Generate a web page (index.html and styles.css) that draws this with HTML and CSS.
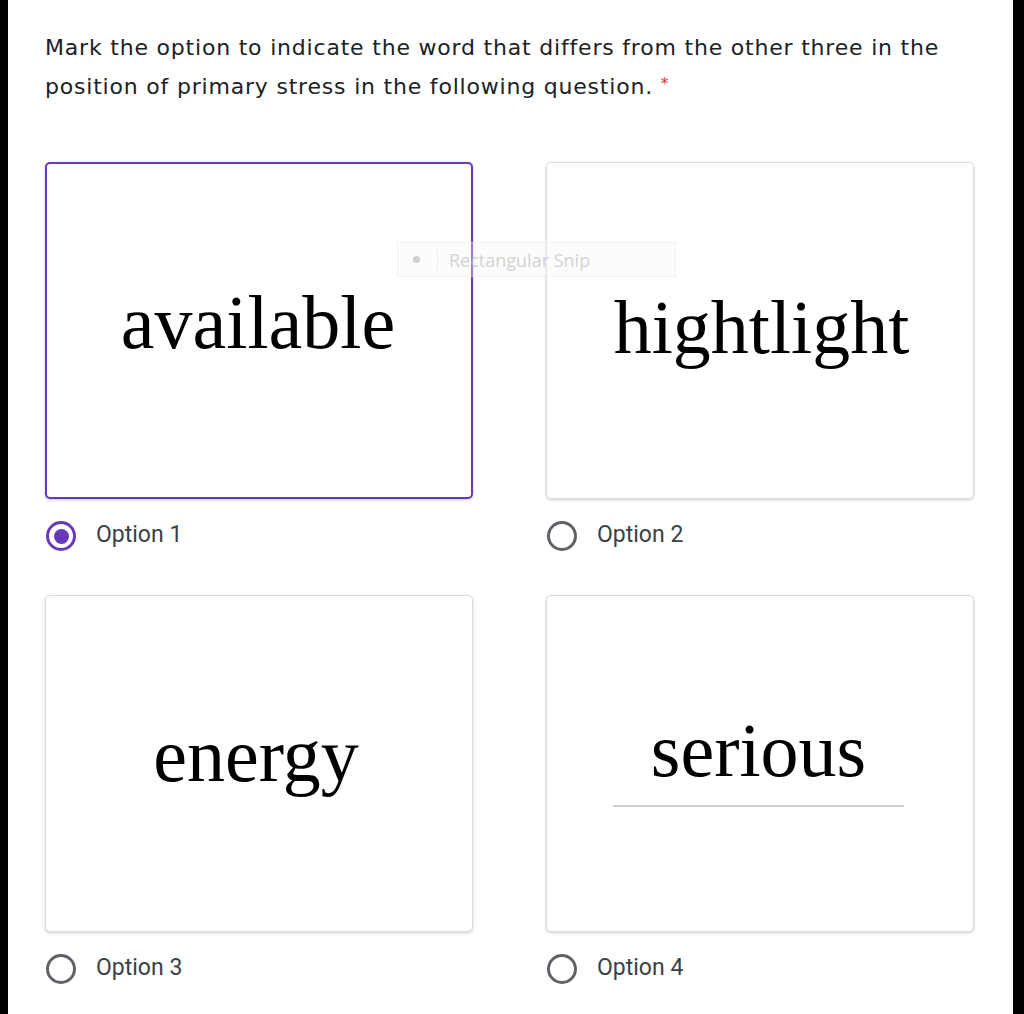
FILE: index.html
```html
<!DOCTYPE html>
<html lang="en">
<head>
<meta charset="utf-8">
<title>Question</title>
<link rel="stylesheet" href="styles.css">
</head>
<body>
<div class="frame">
  <div class="page">
    <div class="question">Mark the option to indicate the word that differs from the other three in the<br>position of primary stress in the following question. <span class="req">*</span></div>
    <div class="grid">
      <div class="item">
        <div class="card selected"><span class="word w1">available</span></div>
        <div class="opt"><span class="radio checked"></span><span class="label">Option 1</span></div>
      </div>
      <div class="item">
        <div class="card"><span class="word w2">hightlight</span></div>
        <div class="opt"><span class="radio"></span><span class="label">Option 2</span></div>
      </div>
      <div class="item">
        <div class="card"><span class="word w3">energy</span></div>
        <div class="opt"><span class="radio"></span><span class="label">Option 3</span></div>
      </div>
      <div class="item">
        <div class="card"><span class="word w4 underlined">serious</span></div>
        <div class="opt"><span class="radio"></span><span class="label">Option 4</span></div>
      </div>
    </div>
    <div class="snip"><span class="snip-dot"></span><span class="snip-sep"></span><span class="snip-text">Rectangular Snip</span></div>
  </div>
</div>
</body>
</html>
```
FILE: styles.css
```css
html, body {
  margin: 0;
  padding: 0;
  background: #000;
}
.frame {
  width: 1024px;
  height: 1014px;
  box-sizing: border-box;
  border-left: 8px solid #000;
  border-right: 11px solid #000;
  background: #fff;
  overflow: hidden;
}
.page {
  position: relative;
  height: 100%;
  padding: 28px 0 0 37px;
  box-sizing: border-box;
}
.question {
  white-space: nowrap;
  font-family: "DejaVu Sans", "Open Sans", sans-serif;
  font-size: 22px;
  letter-spacing: 0.8px;
  line-height: 39px;
  color: #202124;
}
.req {
  color: #d93025;
  font-size: 15px;
  line-height: 15px;
  vertical-align: 5px;
  letter-spacing: 0;
}
.grid {
  display: grid;
  grid-template-columns: 428px 428px;
  column-gap: 73px;
  row-gap: 44px;
  margin-top: 56px;
}
.item {
  display: flex;
  flex-direction: column;
}
.card {
  height: 337px;
  box-sizing: border-box;
  border: 1px solid #dadce0;
  border-radius: 5px;
  background: #fff;
  box-shadow: 0 1px 3px rgba(60, 64, 67, 0.25);
  display: flex;
  flex-direction: column;
  align-items: center;
  padding-top: 118px;
}
.card.selected {
  border: 2px solid #673ab7;
  box-shadow: 0 1px 3px rgba(103, 58, 183, 0.3);
}
.word {
  font-family: "Liberation Serif", "Times New Roman", serif;
  font-size: 76px;
  line-height: 84px;
  color: #000;
}
.w1 { margin-top: -2px; margin-left: -2px; }
.w2 { margin-top: 4px; margin-left: 3px; }
.w3 { margin-top: -1px; margin-left: -6px; }
.w4 { margin-top: -6px; margin-left: -3px; }
.underlined {
  padding: 0 38px 13px;
  border-bottom: 2px solid #d0d0d0;
}
.opt {
  display: flex;
  align-items: center;
  margin-top: 22px;
  height: 30px;
}
.radio {
  width: 30px;
  height: 30px;
  box-sizing: border-box;
  border: 3px solid #5f6368;
  border-radius: 50%;
  margin-left: 1px;
  display: flex;
  align-items: center;
  justify-content: center;
}
.radio.checked {
  border-color: #673ab7;
}
.radio.checked::after {
  content: "";
  width: 15px;
  height: 15px;
  border-radius: 50%;
  background: #673ab7;
}
.label {
  margin-left: 20px;
  margin-top: -4px;
  font-family: "Roboto", sans-serif;
  font-size: 23px;
  color: #3c4043;
}
.snip {
  position: absolute;
  left: 389px;
  top: 242px;
  width: 277px;
  height: 33px;
  background: rgba(245, 245, 245, 0.35);
  border: 1px solid rgba(230, 230, 230, 0.5);
  display: flex;
  align-items: center;
  font-family: "Open Sans", sans-serif;
  font-size: 18px;
  color: rgba(190, 190, 190, 0.7);
}
.snip-dot {
  width: 7px;
  height: 7px;
  border-radius: 50%;
  background: rgba(190, 190, 190, 0.7);
  margin-left: 15px;
}
.snip-sep {
  width: 1px;
  height: 22px;
  background: rgba(230, 230, 230, 0.6);
  margin-left: 17px;
}
.snip-text {
  margin-left: 11px;
}
```
